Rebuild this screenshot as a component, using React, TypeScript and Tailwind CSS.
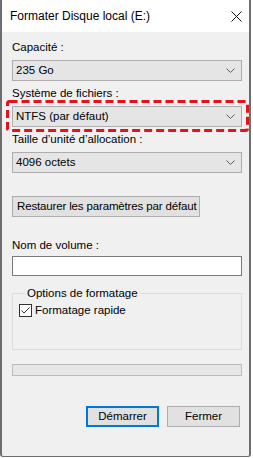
import React from "react";

const FONT = { fontFamily: '"Segoe UI", "Liberation Sans", Arial, sans-serif' };

function Chevron() {
  return (
    <svg width="9" height="5" viewBox="0 0 9 5" className="shrink-0">
      <path d="M0.5 0.5 L4.5 4.5 L8.5 0.5" fill="none" stroke="#5c5c5c" strokeWidth="1" />
    </svg>
  );
}

function Combo({ value }: { value: string }) {
  return (
    <div className="flex h-[21px] items-center justify-between border border-[#adadad] bg-[#e5e5e5] pl-[3px] pr-[6px]">
      <span className="leading-[15px]">{value}</span>
      <Chevron />
    </div>
  );
}

function Label({ children, className = "" }: { children: React.ReactNode; className?: string }) {
  return <div className={"h-[15px] leading-[15px] " + className}>{children}</div>;
}

export default function App() {
  return (
    <div className="relative h-[458px] w-[253px] overflow-hidden bg-white text-[11.5px] text-black" style={FONT}>
      <div className="flex h-[457px] w-[251px] flex-col rounded-b-[3px] border-x-2 border-b border-[#6e6e6e] bg-[#f0f0f0]">
        {/* title bar */}
        <div className="flex h-[32px] shrink-0 items-center justify-between bg-white pl-[8px] pr-[7px]">
          <span className="text-[12px] leading-[15px]">Formater Disque local (E:)</span>
          <svg width="11" height="11" viewBox="0 0 11 11">
            <path d="M0.5 0.5 L10.5 10.5 M10.5 0.5 L0.5 10.5" stroke="#111" strokeWidth="1" />
          </svg>
        </div>

        <div className="flex flex-col pl-[10px] pr-[7px] pt-[8px]">
          <Label>Capacité :</Label>
          <div className="mt-[5px]">
            <Combo value="235 Go" />
          </div>

          <Label className="mt-[5px]">Système de fichiers :</Label>
          <div className="relative mt-[5px]">
            <Combo value="NTFS (par défaut)" />
            <svg
              width="243"
              height="32"
              viewBox="0 0 243 32"
              className="pointer-events-none absolute left-[-6px] top-[-6px]"
            >
              <rect
                x="1.5"
                y="1.5"
                width="240"
                height="29"
                rx="2"
                fill="none"
                stroke="#e5121b"
                strokeWidth="3"
                strokeDasharray="8 4"
              />
            </svg>
          </div>

          <Label className="mt-[5px]">Taille d’unité d’allocation :</Label>
          <div className="mt-[5px]">
            <Combo value="4096 octets" />
          </div>

          <button className="mt-[23px] flex h-[21px] w-[188px] items-center overflow-hidden whitespace-nowrap border border-[#adadad] bg-[#e1e1e1] pl-[4px] leading-[15px] tracking-[-0.15px]">
            Restaurer les paramètres par défaut
          </button>

          <Label className="mt-[21px]">Nom de volume :</Label>
          <div className="mt-[3px] h-[20px] border border-[#7a7a7a] bg-white" />

          <fieldset className="mt-[10px] h-[64px] border border-[#dcdcdc] pl-[6px]">
            <legend className="ml-[6px] px-[2px] leading-[15px]">Options de formatage</legend>
            <div className="mt-[3px] flex items-center gap-[3px]">
              <svg width="13" height="13" viewBox="0 0 13 13" className="shrink-0">
                <rect x="0.5" y="0.5" width="12" height="12" fill="#fff" stroke="#333" />
                <path d="M2.5 6.5 L5 9 L10.5 3.5" fill="none" stroke="#333" strokeWidth="1" />
              </svg>
              <span className="leading-[13px]">Formatage rapide</span>
            </div>
          </fieldset>

          <div className="mt-[14px] h-[12px] border border-[#bcbcbc] bg-[#e6e6e6]" />

          <div className="mr-[2px] mt-[30px] flex justify-end gap-[8px]">
            <button className="flex h-[21px] w-[73px] items-center justify-center border-2 border-[#0078d7] bg-[#e1e1e1] leading-[15px]">
              Démarrer
            </button>
            <button className="flex h-[21px] w-[73px] items-center justify-center border border-[#adadad] bg-[#e1e1e1] leading-[15px]">
              Fermer
            </button>
          </div>
        </div>
      </div>
    </div>
  );
}
